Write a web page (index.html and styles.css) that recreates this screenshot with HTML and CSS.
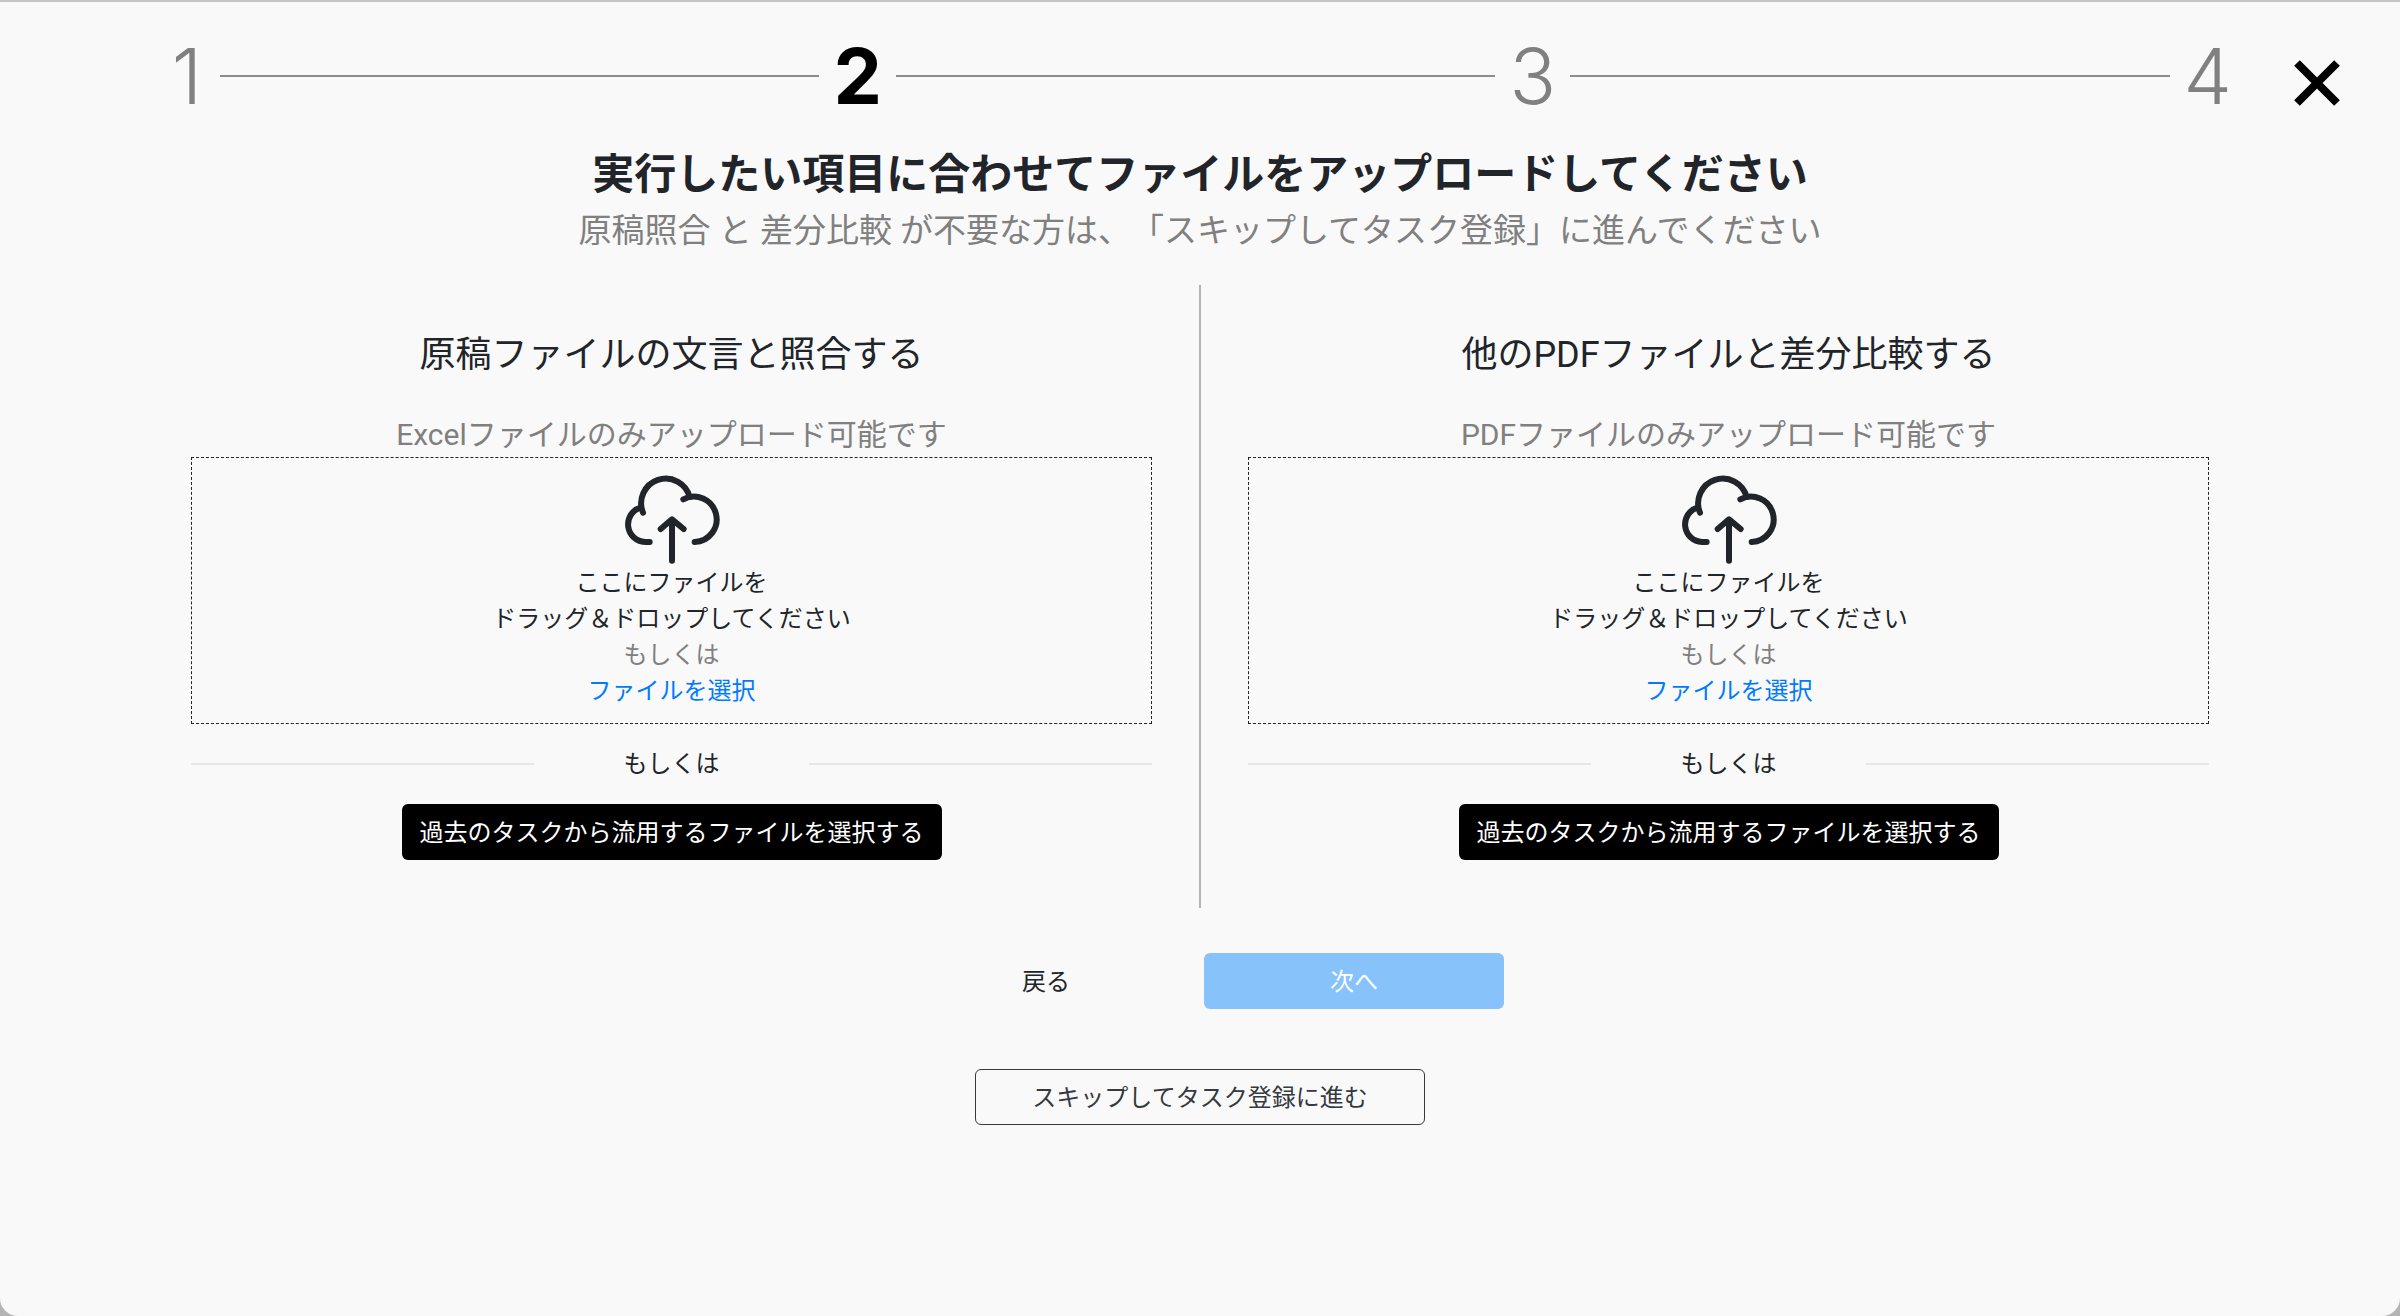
FILE: index.html
```
<!DOCTYPE html>
<html lang="ja">

<head>
    <meta charset="UTF-8">
    <meta name="viewport" content="width=device-width, initial-scale=1.0">
    <title>ファイルのアップロード</title>
    <link rel="stylesheet" href="styles.css">
</head>

<body>
    <!-- アイコン定義 -->
    <svg class="sprite" aria-hidden="true">
        <symbol id="icon-upload" viewBox="0 0 288 288">
            <path d="M77 219H63A53 53 0 0 1 51 115" />
            <path d="M57 131A74 74 0 1 1 197 84" />
            <path d="M178 91A68 68 0 1 1 212 219" />
            <path d="M144 275V152M110 180L144 151L179 180" />
        </symbol>
    </svg>

    <div class="modal">
        <header class="head">
            <ol class="steps">
                <li class="step">1</li>
                <li class="line"></li>
                <li class="step active" aria-current="step">2</li>
                <li class="line"></li>
                <li class="step">3</li>
                <li class="line"></li>
                <li class="step">4</li>
            </ol>
            <button type="button" class="close" aria-label="閉じる">
                <svg viewBox="0 0 46 46">
                    <path d="M3 3L43 43M43 3L3 43" />
                </svg>
            </button>
        </header>

        <main class="main">
            <h1 class="title">実行したい項目に合わせてファイルをアップロードしてください</h1>
            <p class="lead">原稿照合 と 差分比較 が不要な方は、「スキップしてタスク登録」に進んでください</p>

            <div class="columns">
                <section class="col">
                    <h2 class="col-title">原稿ファイルの文言と照合する</h2>
                    <p class="note">Excelファイルのみアップロード可能です</p>
                    <div class="drop">
                        <svg class="icon"><use href="#icon-upload" /></svg>
                        <p>ここにファイルを<br>ドラッグ＆ドロップしてください</p>
                        <p class="muted">もしくは</p>
                        <a href="#" class="select">ファイルを選択</a>
                    </div>
                    <div class="or">もしくは</div>
                    <button type="button" class="btn btn-black">過去のタスクから流用するファイルを選択する</button>
                </section>
                <section class="col">
                    <h2 class="col-title">他のPDFファイルと差分比較する</h2>
                    <p class="note">PDFファイルのみアップロード可能です</p>
                    <div class="drop">
                        <svg class="icon"><use href="#icon-upload" /></svg>
                        <p>ここにファイルを<br>ドラッグ＆ドロップしてください</p>
                        <p class="muted">もしくは</p>
                        <a href="#" class="select">ファイルを選択</a>
                    </div>
                    <div class="or">もしくは</div>
                    <button type="button" class="btn btn-black">過去のタスクから流用するファイルを選択する</button>
                </section>
            </div>

            <div class="actions">
                <button type="button" class="btn btn-back">戻る</button>
                <button type="button" class="btn btn-next" disabled>次へ</button>
            </div>
            <button type="button" class="btn btn-skip">スキップしてタスク登録に進む</button>
        </main>
    </div>
</body>

</html>
```
FILE: styles.css
```
* {
    margin: 0;
    padding: 0;
    box-sizing: border-box;
}

body {
    background: #b4b4b4;
    color: #212529;
    font-family: Roboto, "Noto Sans CJK JP", sans-serif;
    font-size: 24px;
    line-height: 36px;
}

.sprite {
    display: block;
    width: 0;
    height: 0;
}

.modal {
    min-height: 100vh;
    border-top: 2px solid #c6c6c6;
    border-radius: 0 0 18px 18px;
    background: #f9f9f9;
}

/* ステップ表示 */
.head {
    position: relative;
    padding: 26px 7% 0;
}

.steps {
    display: flex;
    align-items: center;
    gap: 14px;
    list-style: none;
    font-family: Inter, sans-serif;
    font-size: 77px;
    line-height: 96px;
    font-weight: 300;
    color: #808080;
}

.step {
    min-width: 38px;
    text-align: center;
}

.steps .active {
    font-weight: 700;
    color: #000;
}

.steps .line {
    flex: 1;
    height: 2px;
    background: #8c8c8c;
}

.close {
    position: absolute;
    top: 58px;
    right: 60px;
    width: 46px;
    height: 46px;
    border: none;
    background: none;
    cursor: pointer;
}

.close svg {
    display: block;
    stroke: #000;
    stroke-width: 8;
}

.main {
    display: flex;
    flex-direction: column;
    align-items: center;
    padding: 23px 6% 48px;
    text-align: center;
}

.title {
    font-size: 42px;
    line-height: 56px;
    font-weight: 700;
}

.lead {
    font-size: 33px;
    line-height: 56px;
    color: #808080;
    text-spacing-trim: space-all;
}

/* アップロード欄 */
.columns {
    display: flex;
    align-self: stretch;
    margin-top: 26px;
}

.col {
    flex: 1;
    display: flex;
    flex-direction: column;
    align-items: center;
    padding: 48px 47px;
}

.col + .col {
    border-left: 2px solid #b4b4b4;
}

.col-title {
    font-size: 36px;
    line-height: 44px;
    margin-bottom: 36px;
    font-weight: 400;
}

.note {
    font-size: 30px;
    line-height: 44px;
    color: #808080;
}

.drop {
    align-self: stretch;
    padding: 11px 0 14px;
    border: 1px dashed #212529;
}

.drop .icon {
    display: block;
    width: 96px;
    height: 96px;
    margin: 0 auto;
    fill: none;
    stroke: currentColor;
    stroke-width: 18;
    stroke-linecap: round;
    stroke-linejoin: round;
}

.muted {
    color: #808080;
}

.select {
    display: block;
    color: #007bff;
    text-decoration: none;
}

.or {
    align-self: stretch;
    display: grid;
    grid-template-columns: 5fr 4fr 5fr;
    align-items: center;
    margin: 22px 0;
}

.or::before,
.or::after {
    content: "";
    height: 2px;
    background: #e6e6e6;
}

.btn {
    height: 56px;
    padding: 0 18px 4px;
    border: none;
    border-radius: 6px;
    background: none;
    color: #212529;
    font-family: inherit;
    font-size: 24px;
    cursor: pointer;
}

.btn-black {
    background: #000;
    color: #fff;
}

/* 下部ボタン */
.actions {
    display: flex;
    gap: 8px;
    margin: 45px 0 60px;
}

.btn-back,
.btn-next {
    width: 300px;
}

.btn-next {
    background: #88c2fa;
    color: #fff;
    cursor: default;
}

.btn-skip {
    width: 450px;
    border: 1px solid #343a40;
    color: #343a40;
}
```
